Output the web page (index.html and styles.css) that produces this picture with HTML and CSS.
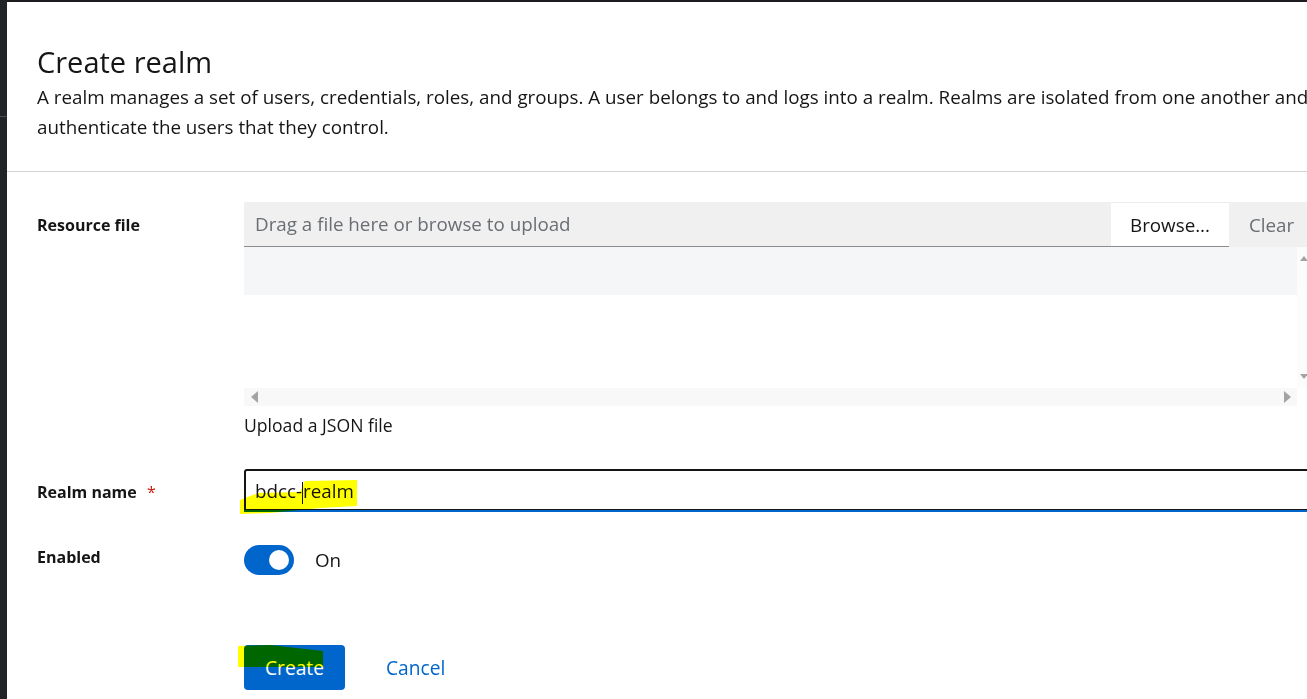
FILE: index.html
```html
<!DOCTYPE html>
<html lang="en">
<head>
<meta charset="utf-8">
<title>Create realm</title>
<link rel="stylesheet" href="styles.css">
</head>
<body>
<div class="app">
  <aside class="rail"><div class="rail-top"></div></aside>
  <main class="page">
    <header class="page-header">
      <h1 class="title">Create realm</h1>
      <p class="lead">A realm manages a set of users, credentials, roles, and groups. A user belongs to and logs into a realm. Realms are isolated from one another and<br>authenticate the users that they control.</p>
    </header>
    <form class="form">
      <div class="row row-upload">
        <label class="label">Resource file</label>
        <div class="field">
          <div class="upload-bar">
            <span class="upload-input">Drag a file here or browse to upload</span>
            <span class="btn-browse">Browse...</span>
            <span class="btn-clear">Clear</span>
          </div>
          <div class="upload-area">
            <div class="area-main"><div class="area-band"></div></div>
            <div class="vscroll"><i class="arr arr-up"></i><i class="arr arr-down"></i></div>
          </div>
          <div class="hscroll-row">
            <div class="hscroll"><i class="arr arr-left"></i><i class="arr arr-right"></i></div>
            <div class="corner"></div>
          </div>
          <div class="helper">Upload a JSON file</div>
        </div>
      </div>

      <div class="row row-name">
        <label class="label label-pad">Realm name <span class="req">*</span></label>
        <div class="field">
          <div class="text-input">
            <span class="value">bdcc-<span class="caret"></span>realm</span>
            <span class="mark mark-input"></span>
          </div>
        </div>
      </div>

      <div class="row row-enabled">
        <label class="label">Enabled</label>
        <div class="field switch-field">
          <span class="switch"><span class="knob"></span></span>
          <span class="switch-label">On</span>
        </div>
      </div>

      <div class="row row-actions">
        <span></span>
        <div class="field actions">
          <span class="btn-primary">Create<span class="mark mark-btn"></span></span>
          <span class="btn-link">Cancel</span>
        </div>
      </div>
    </form>
  </main>
</div>
</body>
</html>
```

FILE: styles.css
```css
* { box-sizing: border-box; }

html, body {
  margin: 0;
  height: 100%;
  overflow: hidden;
  background: #ffffff;
}

body {
  font-family: "Open Sans", "Liberation Sans", sans-serif;
  color: #151515;
}

.app {
  display: flex;
  width: 1344px;
  height: 699px;
}

.rail {
  flex: none;
  width: 7px;
  background: #212427;
}

.rail-top {
  height: 117px;
  border-bottom: 1px solid #4a4d50;
}

.page {
  flex: 1;
  border-top: 2px solid #1b1d21;
}

.page-header {
  padding: 40px 30px 29px;
  border-bottom: 1px solid #d2d2d2;
}

.title {
  margin: 0;
  font-size: 29px;
  font-weight: 400;
  line-height: 40px;
}

.lead {
  margin: 0;
  font-size: 18.8px;
  line-height: 30px;
  white-space: nowrap;
}

.form {
  padding: 30px 30px 0;
}

.row {
  display: grid;
  grid-template-columns: 207px 1070px;
}

.label {
  font-size: 16px;
  font-weight: 700;
  line-height: 24px;
}

.row-upload .label { padding-top: 11px; }
.label-pad { padding-top: 11px; }

.req {
  color: #c9190b;
  font-weight: 400;
  margin-left: 6px;
}

/* file upload */
.upload-bar {
  display: flex;
  height: 45px;
  background: #f0f0f0;
  font-size: 18.8px;
}

.upload-input {
  flex: 1;
  display: flex;
  align-items: center;
  padding-left: 11px;
  color: #6a6e73;
  border-bottom: 1px solid #8a8d90;
}

.btn-browse {
  width: 118px;
  display: flex;
  align-items: center;
  justify-content: center;
  background: #ffffff;
  border-top: 1px solid #ececec;
  border-bottom: 1px solid #8a8d90;
}

.btn-clear {
  width: 85px;
  display: flex;
  align-items: center;
  padding-left: 20px;
  color: #6a6e73;
}

.upload-area {
  display: flex;
  height: 141px;
}

.area-main {
  flex: 1;
  background: #ffffff;
}

.area-band {
  height: 48px;
  background: #f5f6f8;
}

.vscroll {
  width: 17px;
  background: #fcfcfc;
  display: flex;
  flex-direction: column;
  justify-content: space-between;
  align-items: flex-end;
  padding: 9px 0 9px 0;
}

.hscroll-row {
  display: flex;
  height: 18px;
}

.hscroll {
  flex: 1;
  background: #f8f8f8;
  display: flex;
  align-items: center;
  justify-content: space-between;
  padding: 0 6px 0 7px;
}

.corner {
  width: 17px;
  background: #ffffff;
}

.arr {
  display: block;
  width: 0;
  height: 0;
}

.arr-up {
  border-left: 4px solid transparent;
  border-right: 4px solid transparent;
  border-bottom: 5px solid #a3a3a3;
  margin-right: 6px;
}

.arr-down {
  border-left: 4px solid transparent;
  border-right: 4px solid transparent;
  border-top: 5px solid #a3a3a3;
  margin-right: 6px;
}

.arr-left {
  border-top: 6px solid transparent;
  border-bottom: 6px solid transparent;
  border-right: 7px solid #a3a3a3;
}

.arr-right {
  border-top: 6px solid transparent;
  border-bottom: 6px solid transparent;
  border-left: 7px solid #a3a3a3;
}

.helper {
  margin-top: 7px;
  font-size: 17.6px;
  line-height: 24px;
}

/* realm name */
.row-name { margin-top: 32px; }

.text-input {
  position: relative;
  height: 41px;
  border: 2px solid #151515;
  border-bottom-width: 1px;
  border-radius: 3px 3px 0 0;
  box-shadow: 0 2px 0 #0066cc;
  padding: 2px 0 0 9px;
  display: flex;
  align-items: center;
  font-size: 18.8px;
}

.caret {
  display: inline-block;
  width: 1px;
  height: 22px;
  background: #151515;
  vertical-align: middle;
}

.mark {
  position: absolute;
  background: #ffff00;
  mix-blend-mode: multiply;
  pointer-events: none;
}

.mark-input {
  left: -6px;
  top: 8px;
  width: 118px;
  height: 36px;
  clip-path: polygon(0 21px, 18px 14px, 60px 13px, 65px 2px, 117px 1px, 117px 27px, 80px 29px, 30px 34px, 0 35px);
}

/* enabled */
.row-enabled { margin-top: 35px; }

.switch-field {
  display: flex;
  align-items: center;
}

.switch {
  position: relative;
  width: 50px;
  height: 30px;
  border-radius: 15px;
  background: #0066cc;
}

.knob {
  position: absolute;
  left: 25px;
  top: 5px;
  width: 20px;
  height: 20px;
  border-radius: 50%;
  background: #ffffff;
}

.switch-label {
  margin-left: 21px;
  font-size: 18.8px;
}

/* actions */
.row-actions { margin-top: 70px; }

.actions {
  display: flex;
  align-items: center;
}

.btn-primary {
  position: relative;
  width: 101px;
  height: 45px;
  border-radius: 4px;
  background: #0066cc;
  color: #ffffff;
  font-size: 19.2px;
  display: flex;
  align-items: center;
  justify-content: center;
}

.mark-btn {
  left: -6px;
  top: 0;
  width: 85px;
  height: 23px;
  clip-path: polygon(0 1px, 32px 0, 85px 6px, 85px 22px, 0 22px);
}

.btn-link {
  margin-left: 41px;
  color: #0066cc;
  font-size: 19.2px;
}
```
